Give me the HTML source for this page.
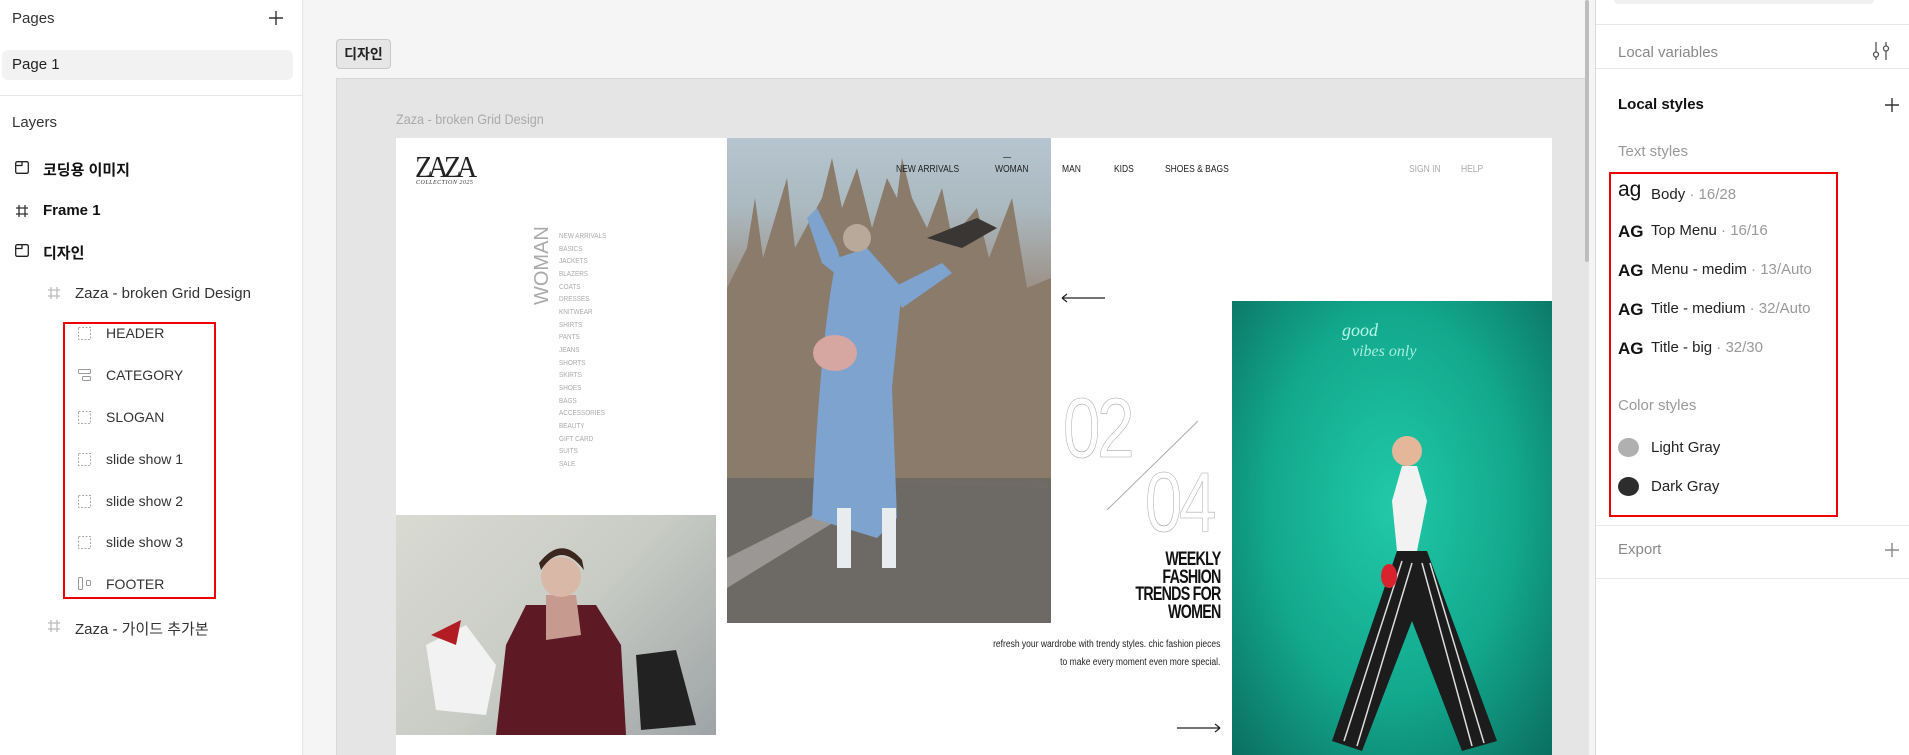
<!DOCTYPE html>
<html><head><meta charset="utf-8">
<style>
*{margin:0;padding:0;box-sizing:border-box}
body{width:1909px;height:755px;overflow:hidden;background:#f5f5f5;font-family:"Liberation Sans","Noto Sans CJK KR",sans-serif;position:relative;color:#222}
.a{position:absolute;white-space:nowrap}
#left{position:absolute;left:0;top:0;width:303px;height:755px;background:#fff;border-right:1px solid #e6e6e6}
#right{position:absolute;left:1595px;top:0;width:314px;height:755px;background:#fff;border-left:1px solid #d9d9d9}
.hr{position:absolute;height:1px;background:#e6e6e6}
.t15{font-size:15px}
.ico{position:absolute}
.nav{position:absolute;top:164px;font-size:10px;color:#222;transform:scaleX(.85);transform-origin:left}
.menu{position:absolute;left:559px;font-size:7.5px;color:#aaa;transform:scaleX(.85);transform-origin:left}
</style></head><body>

<div id="left">
  <div class="a t15" style="left:12px;top:10px;color:#333">Pages</div>
  <svg class="ico" style="left:268px;top:10px" width="16" height="16"><path d="M8 1V15M1 8H15" stroke="#333" stroke-width="1.4"/></svg>
  <div class="a" style="left:2px;top:50px;width:291px;height:30px;background:#f2f2f2;border-radius:6px"></div>
  <div class="a t15" style="left:12px;top:56px;color:#222">Page 1</div>
  <div class="hr" style="left:0;top:95px;width:303px"></div>
  <div class="a t15" style="left:12px;top:114px;color:#333">Layers</div>

  <svg class="ico" style="left:15px;top:161px" width="14" height="13"><rect x=".7" y=".7" width="12.6" height="11.6" rx="1.5" fill="none" stroke="#222" stroke-width="1.3"/><path d="M.7 4.5H7V.7" fill="none" stroke="#222" stroke-width="1.3"/></svg>
  <div class="a t15" style="left:43px;top:159px;font-weight:bold;color:#111">코딩용 이미지</div>
  <svg class="ico" style="left:15px;top:204px" width="14" height="14"><path d="M4 1V13M10 1V13M1 4H13M1 10H13" stroke="#333" stroke-width="1.3"/></svg>
  <div class="a t15" style="left:43px;top:202px;font-weight:bold;color:#111">Frame 1</div>
  <svg class="ico" style="left:15px;top:244px" width="14" height="13"><rect x=".7" y=".7" width="12.6" height="11.6" rx="1.5" fill="none" stroke="#222" stroke-width="1.3"/><path d="M.7 4.5H7V.7" fill="none" stroke="#222" stroke-width="1.3"/></svg>
  <div class="a t15" style="left:43px;top:242px;font-weight:bold;color:#111">디자인</div>
  <svg class="ico" style="left:47px;top:286px" width="14" height="14"><path d="M4 1V13M10 1V13M1 4H13M1 10H13" stroke="#bbb" stroke-width="1.3"/></svg>
  <div class="a t15" style="left:75px;top:285px;color:#333">Zaza - broken Grid Design</div>

  <div class="a" style="left:63px;top:322px;width:153px;height:277px;border:2px solid #e00"></div>
  <svg class="ico" style="left:78px;top:327px" width="13" height="13"><rect x=".5" y=".5" width="12" height="12" fill="none" stroke="#aaa" stroke-dasharray="2 1.5"/></svg>
  <div class="a" style="left:106px;top:325px;font-size:14px;color:#333">HEADER</div>
  <svg class="ico" style="left:78px;top:369px" width="13" height="13"><rect x=".5" y=".5" width="12" height="4" rx="1" fill="none" stroke="#999"/><rect x="4.5" y="7.5" width="8" height="4" rx="1" fill="none" stroke="#999"/></svg>
  <div class="a" style="left:106px;top:367px;font-size:14px;color:#333">CATEGORY</div>
  <svg class="ico" style="left:78px;top:411px" width="13" height="13"><rect x=".5" y=".5" width="12" height="12" fill="none" stroke="#aaa" stroke-dasharray="2 1.5"/></svg>
  <div class="a" style="left:106px;top:409px;font-size:14px;color:#333">SLOGAN</div>
  <svg class="ico" style="left:78px;top:453px" width="13" height="13"><rect x=".5" y=".5" width="12" height="12" fill="none" stroke="#aaa" stroke-dasharray="2 1.5"/></svg>
  <div class="a" style="left:106px;top:451px;font-size:14px;color:#333">slide show 1</div>
  <svg class="ico" style="left:78px;top:495px" width="13" height="13"><rect x=".5" y=".5" width="12" height="12" fill="none" stroke="#aaa" stroke-dasharray="2 1.5"/></svg>
  <div class="a" style="left:106px;top:493px;font-size:14px;color:#333">slide show 2</div>
  <svg class="ico" style="left:78px;top:536px" width="13" height="13"><rect x=".5" y=".5" width="12" height="12" fill="none" stroke="#aaa" stroke-dasharray="2 1.5"/></svg>
  <div class="a" style="left:106px;top:534px;font-size:14px;color:#333">slide show 3</div>
  <svg class="ico" style="left:78px;top:577px" width="14" height="13"><rect x=".5" y=".5" width="4" height="12" rx="1" fill="none" stroke="#999"/><rect x="8.5" y="3.5" width="4" height="5" rx="1" fill="none" stroke="#999"/></svg>
  <div class="a" style="left:106px;top:576px;font-size:14px;color:#333">FOOTER</div>
  <svg class="ico" style="left:47px;top:619px" width="14" height="14"><path d="M4 1V13M10 1V13M1 4H13M1 10H13" stroke="#bbb" stroke-width="1.3"/></svg>
  <div class="a t15" style="left:75px;top:618px;color:#333">Zaza - 가이드 추가본</div>
</div>

<!-- canvas -->
<div class="a" style="left:336px;top:39px;width:55px;height:30px;background:#e6e6e6;border:1px solid #c8c8c8;border-radius:4px;font-size:14px;font-weight:bold;text-align:center;line-height:28px;color:#222">디자인</div>
<div class="a" style="left:336px;top:78px;width:1253px;height:677px;background:#e5e5e5;border-top:1px solid #d8d8d8;border-left:1px solid #d8d8d8"></div>
<div class="a" style="left:1585px;top:0;width:4px;height:262px;background:#bdbdbd;border-radius:2px"></div>
<div class="a" style="left:396px;top:111px;font-size:14px;color:#aaa;transform:scaleX(.9);transform-origin:left">Zaza - broken Grid Design</div>

<div class="a" style="left:396px;top:138px;width:1156px;height:617px;background:#fff"></div>
<!-- logo -->
<div class="a" style="left:415px;top:151px;font-family:'Liberation Serif',serif;font-size:31px;letter-spacing:-5px;color:#222;transform:scaleX(.92);transform-origin:left;line-height:31px">ZAZA</div>
<div class="a" style="left:416px;top:180px;font-family:'Liberation Serif',serif;font-style:italic;font-size:6px;letter-spacing:.5px;color:#333">COLLECTION 2025</div>

<!-- WOMAN vertical -->
<div class="a" style="left:531px;top:305px;font-size:20px;color:#aaa;transform:rotate(-90deg);transform-origin:left top">WOMAN</div>
<div class="menu" style="top:231px">NEW ARRIVALS</div>
<div class="menu" style="top:243.7px">BASICS</div>
<div class="menu" style="top:256.3px">JACKETS</div>
<div class="menu" style="top:269px">BLAZERS</div>
<div class="menu" style="top:281.7px">COATS</div>
<div class="menu" style="top:294.3px">DRESSES</div>
<div class="menu" style="top:307px">KNITWEAR</div>
<div class="menu" style="top:319.7px">SHIRTS</div>
<div class="menu" style="top:332.3px">PANTS</div>
<div class="menu" style="top:345px">JEANS</div>
<div class="menu" style="top:357.7px">SHORTS</div>
<div class="menu" style="top:370.3px">SKIRTS</div>
<div class="menu" style="top:383px">SHOES</div>
<div class="menu" style="top:395.7px">BAGS</div>
<div class="menu" style="top:408.3px">ACCESSORIES</div>
<div class="menu" style="top:421px">BEAUTY</div>
<div class="menu" style="top:433.7px">GIFT CARD</div>
<div class="menu" style="top:446.3px">SUITS</div>
<div class="menu" style="top:459px">SALE</div>

<!-- Milan image -->
<div class="a" style="left:727px;top:138px;width:324px;height:485px;overflow:hidden;background:linear-gradient(180deg,#b6c5cf 0%,#aab8bf 15%,#9b8f83 32%,#857869 55%,#6f6a64 70%,#77726c 85%,#5d5955 100%)">
  <svg width="324" height="485" style="position:absolute;left:0;top:0">
    <path d="M0 150 L20 110 L28 60 L36 120 L60 40 L68 110 L95 60 L105 20 L115 70 L130 30 L145 90 L160 40 L170 60 L175 20 L185 60 L200 90 L215 50 L225 100 L250 70 L262 120 L285 60 L300 150 L324 140 V340 H0Z" fill="#8a7b6b"/>
    <path d="M0 340 L324 350 V485 H0Z" fill="#6d6a66"/>
    <path d="M0 420 L120 360 L130 370 L0 450Z" fill="#b9b6b2" opacity=".6"/>
    <path d="M110 120 C100 160 90 260 85 380 L150 400 L170 380 L165 250 L175 150 L140 110Z" fill="#7ea3cf"/>
    <path d="M120 145 L95 125 L80 80 L90 70 L110 110 Z" fill="#7ea3cf"/>
    <path d="M165 150 L215 125 L225 135 L175 170Z" fill="#7ea3cf"/>
    <circle cx="130" cy="100" r="14" fill="#b9a99a"/>
    <ellipse cx="108" cy="215" rx="22" ry="18" fill="#d6a6a0"/>
    <rect x="110" y="370" width="14" height="60" fill="#e8ecef"/>
    <rect x="155" y="370" width="14" height="60" fill="#e8ecef"/>
    <path d="M200 100 L250 80 L270 90 L235 110Z" fill="#3a3634"/>
  </svg>
</div>

<!-- nav -->
<div class="nav" style="left:896px">NEW ARRIVALS</div>
<div class="a" style="left:1003px;top:157px;width:8px;height:1px;background:#555"></div>
<div class="nav" style="left:995px">WOMAN</div>
<div class="nav" style="left:1062px">MAN</div>
<div class="nav" style="left:1114px">KIDS</div>
<div class="nav" style="left:1165px">SHOES &amp; BAGS</div>
<div class="nav" style="left:1409px;color:#aaa">SIGN IN</div>
<div class="nav" style="left:1461px;color:#aaa">HELP</div>

<!-- arrows -->
<svg class="ico" style="left:1060px;top:292px" width="46" height="12"><path d="M2 6H45M2 6L7 2M2 6L7 10" stroke="#222" stroke-width="1.2" fill="none"/></svg>
<svg class="ico" style="left:1176px;top:722px" width="46" height="12"><path d="M1 6H44M44 6L39 2M44 6L39 10" stroke="#222" stroke-width="1.2" fill="none"/></svg>

<!-- 02 / 04 -->
<div class="a" style="left:1063px;top:386px;font-size:84px;color:#fff;-webkit-text-stroke:.6px #a8a8a8;letter-spacing:-4px;transform:scaleX(.8);transform-origin:left;line-height:84px">02</div>
<div class="a" style="left:1145px;top:460px;font-size:84px;color:#fff;-webkit-text-stroke:.6px #a8a8a8;letter-spacing:-4px;transform:scaleX(.8);transform-origin:left;line-height:84px">04</div>
<svg class="ico" style="left:1105px;top:420px" width="95" height="92"><path d="M93 1L2 90" stroke="#aaa" stroke-width="1"/></svg>

<div class="a" style="left:1100px;top:551px;width:120px;text-align:right;font-size:19px;font-weight:bold;line-height:17.6px;letter-spacing:-1px;color:#111;white-space:normal"><span style="display:inline-block;transform:scaleX(.75);transform-origin:right">WEEKLY<br>FASHION<br>TRENDS FOR<br>WOMEN</span></div>
<div class="a" style="left:900px;top:636px;width:320px;text-align:right;font-size:10px;line-height:18px;color:#222"><span style="display:inline-block;transform:scaleX(.85);transform-origin:right">refresh your wardrobe with trendy styles. chic fashion pieces<br>to make every moment even more special.</span></div>

<!-- bottom-left image -->
<div class="a" style="left:396px;top:515px;width:320px;height:220px;overflow:hidden;background:linear-gradient(135deg,#d9dad2 0%,#c9ccc5 50%,#9ea4a6 100%)">
  <svg width="320" height="220" style="position:absolute;left:0;top:0">
    <path d="M130 90 L110 130 L100 220 L230 220 L225 130 L200 90Z" fill="#5e1a24"/>
    <path d="M150 80 L180 80 L185 120 L150 125Z" fill="#c79a90"/>
    <circle cx="165" cy="62" r="20" fill="#d9b8a7"/>
    <path d="M145 55 Q165 25 188 55 L186 45 Q165 20 143 48Z" fill="#3b2620"/>
    <path d="M30 130 L70 110 L100 150 L90 200 L40 195Z" fill="#f2f2f2"/>
    <path d="M35 120 L65 105 L60 130 Z" fill="#b21d24"/>
    <path d="M240 140 L280 135 L300 210 L245 215Z" fill="#222"/>
  </svg>
</div>

<!-- teal image -->
<div class="a" style="left:1232px;top:301px;width:320px;height:454px;overflow:hidden;background:radial-gradient(ellipse at 50% 45%,#21c9a8 0%,#12a88d 55%,#0b6e5f 100%)">
  <svg width="320" height="454" style="position:absolute;left:0;top:0">
    <text x="110" y="35" font-family="Liberation Serif" font-style="italic" font-size="18" fill="#c8fff2" opacity=".9">good</text>
    <text x="120" y="55" font-family="Liberation Serif" font-style="italic" font-size="16" fill="#c8fff2" opacity=".8">vibes only</text>
    <path d="M170 165 L160 200 L165 250 L185 250 L195 200 L185 165Z" fill="#f2f2f2"/>
    <circle cx="175" cy="150" r="15" fill="#e5b79a"/>
    <path d="M165 250 L100 440 L130 450 L180 320 L230 450 L265 440 L195 250Z" fill="#1c1c1c"/>
    <path d="M170 260 L112 440 M180 262 L125 445 M190 262 L240 445 M198 262 L252 442" stroke="#ddd" stroke-width="1.5"/>
    <ellipse cx="157" cy="275" rx="8" ry="12" fill="#d8232f"/>
  </svg>
</div>

<!-- right panel -->
<div id="right">
  <div class="a" style="left:18px;top:0;width:260px;height:4px;background:#f0f0f0;border-radius:0 0 6px 6px"></div>
  <div class="hr" style="left:0;top:24px;width:314px"></div>
  <div class="a t15" style="left:22px;top:44px;color:#888">Local variables</div>
  <svg class="ico" style="left:275px;top:40px" width="20" height="22"><path d="M5 2V12M15 2V6M15 11V20M5 17V20" stroke="#555" stroke-width="1.3"/><circle cx="5" cy="14.5" r="2.5" fill="none" stroke="#555" stroke-width="1.3"/><circle cx="15" cy="8.5" r="2.5" fill="none" stroke="#555" stroke-width="1.3"/></svg>
  <div class="hr" style="left:0;top:68px;width:314px"></div>
  <div class="a t15" style="left:22px;top:96px;color:#111;font-weight:bold">Local styles</div>
  <svg class="ico" style="left:288px;top:97px" width="16" height="16"><path d="M8 1V15M1 8H15" stroke="#333" stroke-width="1.4"/></svg>
  <div class="a t15" style="left:22px;top:143px;color:#999">Text styles</div>
  <div class="a" style="left:13px;top:172px;width:229px;height:345px;border:2px solid #e00"></div>
  <div class="a" style="left:22px;top:178px;font-size:21px;color:#111">ag</div>
  <div class="a t15" style="left:55px;top:186px;color:#222">Body <span style="color:#999">· 16/28</span></div>
  <div class="a" style="left:22px;top:222px;font-size:17px;font-weight:bold;color:#111">AG</div>
  <div class="a t15" style="left:55px;top:222px;color:#222">Top Menu <span style="color:#999">· 16/16</span></div>
  <div class="a" style="left:22px;top:261px;font-size:17px;font-weight:bold;color:#111">AG</div>
  <div class="a t15" style="left:55px;top:261px;color:#222">Menu - medim <span style="color:#999">· 13/Auto</span></div>
  <div class="a" style="left:22px;top:300px;font-size:17px;font-weight:bold;color:#111">AG</div>
  <div class="a t15" style="left:55px;top:300px;color:#222">Title - medium <span style="color:#999">· 32/Auto</span></div>
  <div class="a" style="left:22px;top:339px;font-size:17px;font-weight:bold;color:#111">AG</div>
  <div class="a t15" style="left:55px;top:339px;color:#222">Title - big <span style="color:#999">· 32/30</span></div>
  <div class="a t15" style="left:22px;top:397px;color:#999">Color styles</div>
  <div class="a" style="left:22px;top:438px;width:21px;height:19px;border-radius:50%;background:#b0b0b0"></div>
  <div class="a t15" style="left:55px;top:439px;color:#222">Light Gray</div>
  <div class="a" style="left:22px;top:477px;width:21px;height:19px;border-radius:50%;background:#2d2d2d"></div>
  <div class="a t15" style="left:55px;top:478px;color:#222">Dark Gray</div>
  <div class="hr" style="left:0;top:525px;width:314px"></div>
  <div class="a t15" style="left:22px;top:541px;color:#888">Export</div>
  <svg class="ico" style="left:288px;top:542px" width="16" height="16"><path d="M8 1V15M1 8H15" stroke="#888" stroke-width="1.4"/></svg>
  <div class="hr" style="left:0;top:578px;width:314px"></div>
</div>
</body></html>
